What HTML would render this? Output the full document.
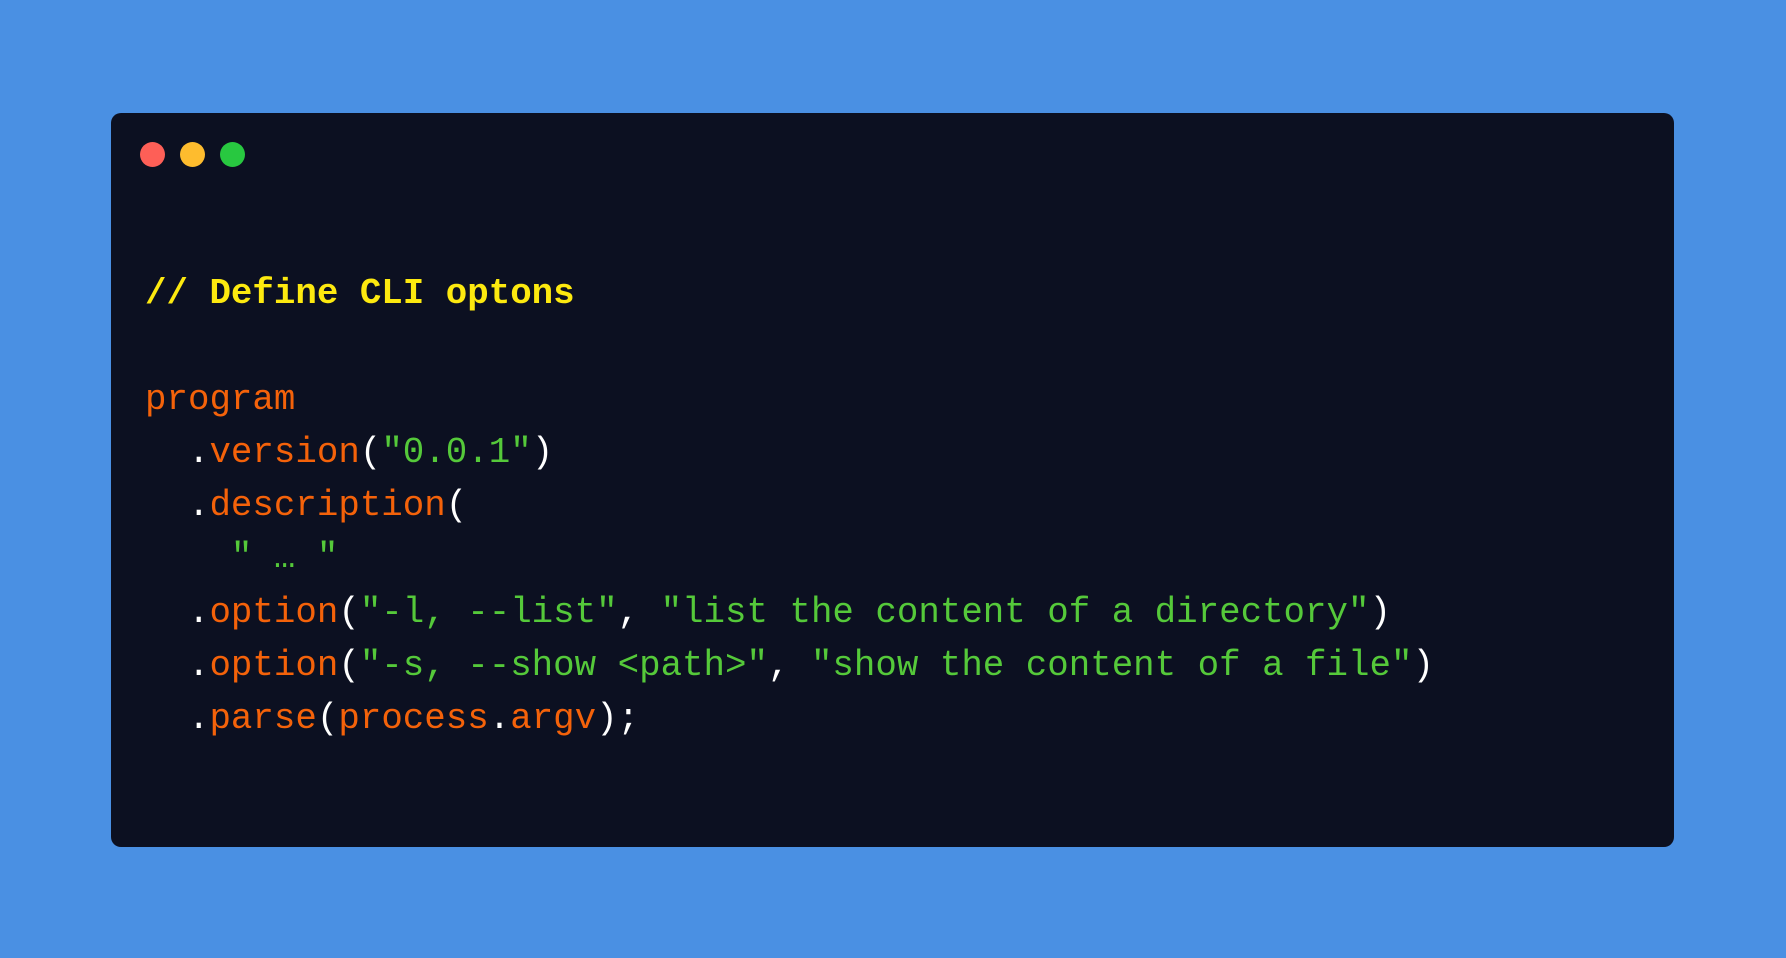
<!DOCTYPE html>
<html><head><meta charset="utf-8"><style>
html,body{margin:0;padding:0}
body{width:1786px;height:958px;background:#4a90e3;position:relative;overflow:hidden}
.card{position:absolute;left:111px;top:113px;width:1563px;height:734px;background:#0c1021;border-radius:10px}
.dot{position:absolute;top:142px;width:25px;height:25px;border-radius:50%}
.l{position:absolute;left:145px;font-family:"Liberation Mono",monospace;font-size:35.8px;line-height:1;white-space:pre;color:#fff}
.o{color:#f4620a}.g{color:#55c93a}.y{color:#fde90f;font-weight:bold}
</style></head><body>
<div class="card"></div>
<div class="dot" style="left:140px;background:#fe5f57"></div>
<div class="dot" style="left:180px;background:#febc2e"></div>
<div class="dot" style="left:220px;background:#28c840"></div>
<div class="l y" style="top:276px">// Define CLI optons</div>
<div class="l o" style="top:382px">program</div>
<div class="l" style="top:435px">  .<span class="o">version</span>(<span class="g">"0.0.1"</span>)</div>
<div class="l" style="top:488px">  .<span class="o">description</span>(</div>
<div class="l g" style="top:540px">    " … "</div>
<div class="l" style="top:595px">  .<span class="o">option</span>(<span class="g">"-l, --list"</span>, <span class="g">"list the content of a directory"</span>)</div>
<div class="l" style="top:648px">  .<span class="o">option</span>(<span class="g">"-s, --show &lt;path&gt;"</span>, <span class="g">"show the content of a file"</span>)</div>
<div class="l" style="top:701px">  .<span class="o">parse</span>(<span class="o">process</span>.<span class="o">argv</span>);</div>
</body></html>
